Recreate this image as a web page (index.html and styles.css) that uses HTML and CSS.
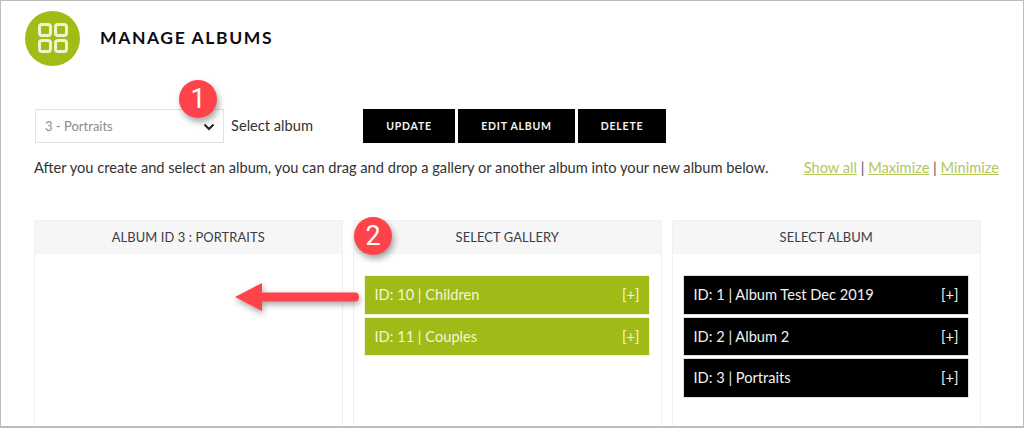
FILE: index.html
```html
<!DOCTYPE html>
<html lang="en">
<head>
<meta charset="utf-8">
<title>Manage Albums</title>
<link rel="stylesheet" href="styles.css">
</head>
<body>
<div class="frame">
  <header class="page-head">
    <div class="logo">
      <svg width="38" height="38" viewBox="0 0 38 38" fill="none" stroke="#eef3d4" stroke-width="3">
        <rect x="5.5" y="5.5" width="11" height="11" rx="2.5"/>
        <rect x="21.5" y="5.5" width="11" height="11" rx="2.5"/>
        <rect x="5.5" y="21.5" width="11" height="11" rx="2.5"/>
        <rect x="21.5" y="21.5" width="11" height="11" rx="2.5"/>
      </svg>
    </div>
    <h1 class="title">MANAGE ALBUMS</h1>
  </header>

  <div class="controls">
    <div class="select-wrap">
      <select class="album-select"><option>3 - Portraits</option></select>
      <svg class="chevron" width="12" height="8" viewBox="0 0 12 8" fill="none" stroke="#222" stroke-width="2"><path d="M1.5 1.5 L6 6 L10.500 1.5"/></svg>
    </div>
    <span class="select-label">Select album</span>
    <div class="buttons">
      <button class="btn btn-update">UPDATE</button>
      <button class="btn btn-edit">EDIT ALBUM</button>
      <button class="btn btn-delete">DELETE</button>
    </div>
  </div>

  <div class="info">
    <p class="info-text">After you create and select an album, you can drag and drop a gallery or another album into your new album below.</p>
    <div class="links"><a href="#">Show all</a> | <a href="#">Maximize</a> | <a href="#">Minimize</a></div>
  </div>

  <div class="columns">
    <section class="col">
      <h2 class="col-head">ALBUM ID 3 : PORTRAITS</h2>
    </section>
    <section class="col">
      <h2 class="col-head">SELECT GALLERY</h2>
      <ul class="items">
        <li class="item green"><span>ID: 10 | Children</span><span>[+]</span></li>
        <li class="item green"><span>ID: 11 | Couples</span><span>[+]</span></li>
      </ul>
    </section>
    <section class="col">
      <h2 class="col-head">SELECT ALBUM</h2>
      <ul class="items">
        <li class="item black"><span>ID: 1 | Album Test Dec 2019</span><span>[+]</span></li>
        <li class="item black"><span>ID: 2 | Album 2</span><span>[+]</span></li>
        <li class="item black"><span>ID: 3 | Portraits</span><span>[+]</span></li>
      </ul>
    </section>
  </div>

  <div class="badge badge-1">1</div>
  <div class="badge badge-2">2</div>
  <svg class="arrow" width="132" height="40" viewBox="0 0 132 40">
    <path d="M5 20 L32 6 L32 15.500 L125 15.500 Q129 15.500 129 20 Q129 24.500 125 24.500 L32 24.500 L32 34 Z" fill="#fe444a"/>
  </svg>
</div>
</body>
</html>
```
FILE: styles.css
```css
* { box-sizing: border-box; }
html, body { margin: 0; padding: 0; }
body { background: #fff; font-family: Lato, "Liberation Sans", sans-serif; color: #333; }
.frame {
  position: relative;
  width: 1024px;
  height: 428px;
  overflow: hidden;
  border: 1px solid #bdbdbd;
  border-width: 1px 1px 2px 1px;
  padding: 9px 0 0 24px;
}
.page-head { display: flex; align-items: center; height: 56px; }
.logo {
  width: 55px; height: 55px; border-radius: 50%;
  background: #a1bc17;
  display: flex; align-items: center; justify-content: center;
}
.title {
  margin: 0 0 2px 20px;
  font-size: 17.5px; font-weight: 700; letter-spacing: 1.6px; color: #0c0c14;
}
.controls { display: flex; align-items: center; margin: 42px 0 0 10px; height: 35px; }
.select-wrap { position: relative; width: 189px; height: 34px; }
.album-select {
  appearance: none;
  width: 189px; height: 34px;
  font: 13px Lato, "Liberation Sans", sans-serif;
  color: #8c8c8c; background: #fff;
  border: 1px solid #e3e3e3; border-radius: 0;
  padding: 0 0 0 9px;
  outline: none;
}
.chevron { position: absolute; right: 9px; top: 14px; pointer-events: none; }
.select-label { margin-left: 7px; font-size: 14.65px; color: #333; width: 132px; }
.buttons { display: flex; gap: 3px; }
.btn {
  height: 34px; border: 0; background: #000; color: #f4f4f4;
  font: 700 10.500px Lato, "Liberation Sans", sans-serif; letter-spacing: .8px;
  padding: 0;
}
.btn-update { width: 92px; }
.btn-edit { width: 117px; }
.btn-delete { width: 88px; }
.info { display: flex; align-items: center; justify-content: space-between; margin: 7px 24px 0 9px; height: 34px; }
.info-text { margin: 0; font-size: 14.65px; color: #333; }
.links { font-size: 14.65px; color: #556; }
.links a { color: #b3c75a; text-decoration: underline; }
.columns { display: flex; gap: 10.5px; margin: 36px 0 0 9px; }
.col {
  width: 308.500px; height: 260px;
  border: 1px solid #f0f0f0;
}
.col-head {
  margin: 0; height: 33px; line-height: 33px;
  background: #f6f6f6; text-align: center;
  font-size: 12.900px; font-weight: 400; color: #3c3c46;
  letter-spacing: .1px;
}
.items { list-style: none; margin: 22px 0 0; padding: 0 12px 0 11px; display: flex; flex-direction: column; gap: 4px; }
.item {
  height: 37.500px; display: flex; align-items: center; justify-content: space-between;
  padding: 0 9px 0 9.500px; font-size: 14.65px;
}
.green { background: #a0ba17; color: #f2f6d8; box-shadow: 0 0 0 1px #f0f4d8; }
.black { background: #000; color: #f2f2f2; box-shadow: 0 0 0 1px #dedede; }
.badge {
  position: absolute;
  width: 38px; height: 38px; border-radius: 50%;
  background: #fe444a; color: #fff;
  display: flex; align-items: center; justify-content: center;
  font: 400 27px Roboto, "Liberation Sans", sans-serif;
  box-shadow: 2px 4px 6px rgba(0,0,0,.35);
}
.badge-1 { left: 178px; top: 79px; }
.badge-2 { left: 353px; top: 216px; }
.arrow { position: absolute; left: 229px; top: 276px; filter: drop-shadow(1px 3px 3px rgba(0,0,0,.35)); }
```
